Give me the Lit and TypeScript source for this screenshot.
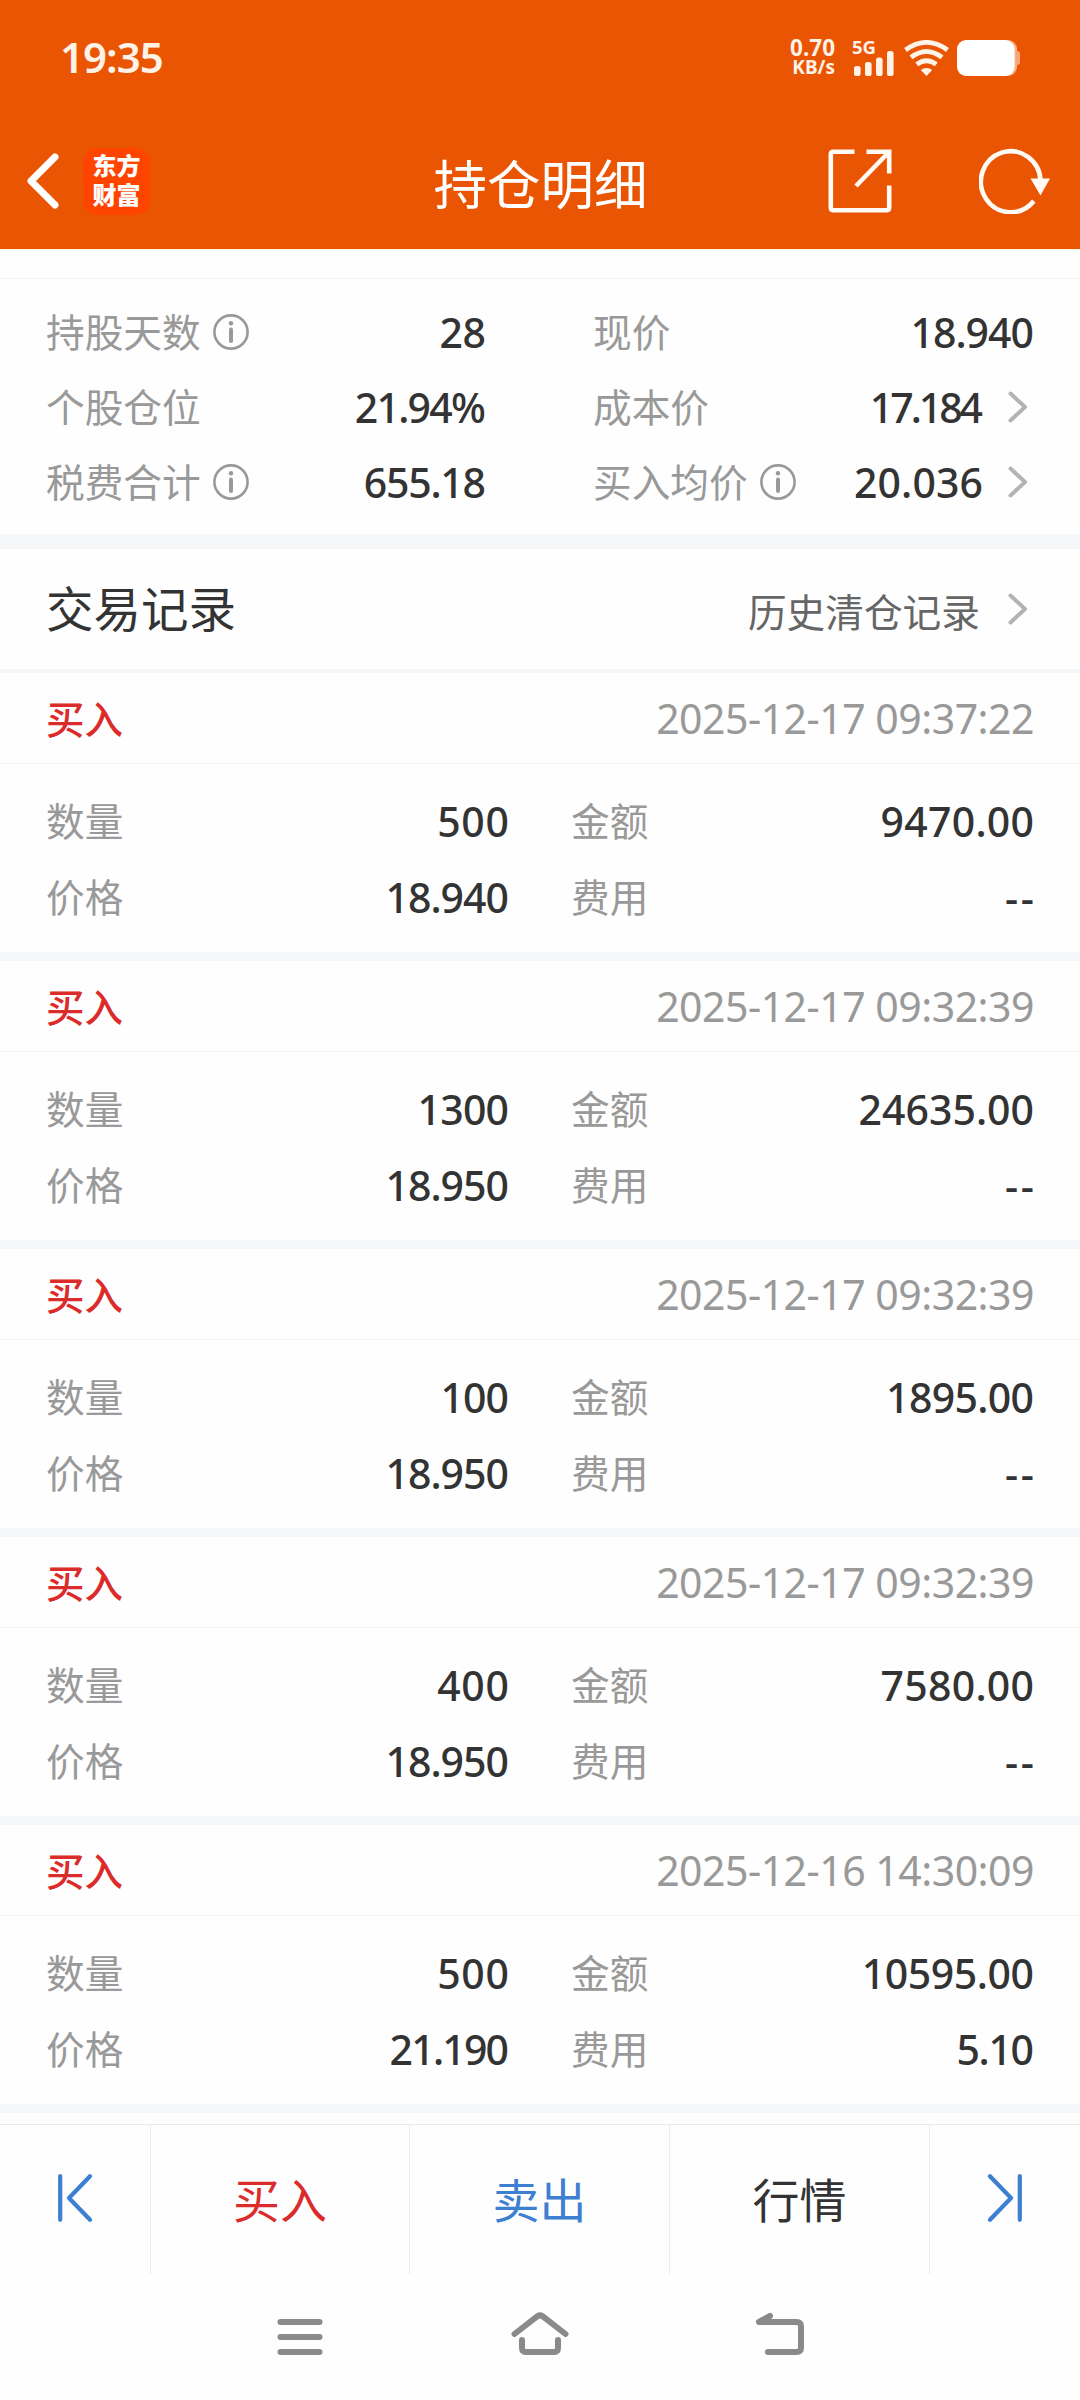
import { LitElement, html, css, svg, nothing } from "lit";
import { customElement, property } from "lit/decorators.js";
import { styleMap } from "lit/directives/style-map.js";

interface Trade {
  time: string;
  qty: string;
  price: string;
  amount: string;
  fee: string;
}

interface Stat {
  label: string;
  value: string;
  info?: boolean;
  link?: boolean;
}

const STATS: Stat[] = [
  { label: "持股天数", value: "28", info: true },
  { label: "现价", value: "18.940" },
  { label: "个股仓位", value: "21.94%" },
  { label: "成本价", value: "17.184", link: true },
  { label: "税费合计", value: "655.18", info: true },
  { label: "买入均价", value: "20.036", info: true, link: true },
];

const TRADES: Trade[] = [
  { time: "2025-12-17 09:37:22", qty: "500", price: "18.940", amount: "9470.00", fee: "--" },
  { time: "2025-12-17 09:32:39", qty: "1300", price: "18.950", amount: "24635.00", fee: "--" },
  { time: "2025-12-17 09:32:39", qty: "100", price: "18.950", amount: "1895.00", fee: "--" },
  { time: "2025-12-17 09:32:39", qty: "400", price: "18.950", amount: "7580.00", fee: "--" },
  { time: "2025-12-16 14:30:09", qty: "500", price: "21.190", amount: "10595.00", fee: "5.10" },
];

const GLYPH_ADJUST: Record<string, number> = { "0": 1.5, "1": -5, ".": -0.5, "%": -3, "-": 3 };

function tracking(value: string) {
  let total = value.includes("17.1") ? -6 : 0;
  for (const ch of value) total += GLYPH_ADJUST[ch] ?? 0;
  const spacing = total / value.length - 0.3;
  return styleMap({ letterSpacing: `${spacing.toFixed(2)}px`, marginRight: `${(-spacing).toFixed(2)}px` });
}

const base = css`
  * { box-sizing: border-box; }
  svg { display: block; flex: none; }
  .label { color: #999; font-size: 38.7px; line-height: 56px; white-space: nowrap; margin-top: -4px; }
  .num {
    color: #333;
    font-family: "Noto Sans", "Noto Sans CJK SC", sans-serif;
    font-weight: 500;
    font-size: 41px;
    line-height: 56px;
    white-space: nowrap;
  }
`;

const chevron = html`<svg width="20" height="32" viewBox="0 0 20 32" fill="none" stroke="#b3b3b3" stroke-width="4" stroke-linecap="round" stroke-linejoin="round"><path d="M2.5 2.5 L17 16 L2.5 29.5"/></svg>`;

const infoIcon = html`<svg width="36" height="36" viewBox="0 0 36 36" fill="none" stroke="#999"><circle cx="18" cy="18" r="16.6" stroke-width="2.6"/><circle cx="18" cy="9.3" r="2.2" fill="#999" stroke="none"/><path d="M18 15.5V27" stroke-width="4" stroke-linecap="round"/></svg>`;

@customElement("status-bar")
export class StatusBar extends LitElement {
  static styles = [base, css`
    :host { display: flex; height: 116px; padding: 0 60px; justify-content: space-between; align-items: center; color: #fff2e6; font-family: "Noto Sans", sans-serif; }
    .clock { font-size: 42px; font-weight: 600; line-height: 60px; letter-spacing: -1px; margin-top: -2px; }
    .right { display: flex; align-items: center; height: 36px; }
    .speed { display: flex; flex-direction: column; align-items: flex-end; width: 46px; font-weight: 700; margin-right: 17px; }
    .rate { font-size: 22.5px; line-height: 21px; margin-top: -2px; }
    .unit { font-size: 19px; line-height: 19px; }
    .signal { width: 43px; height: 36px; margin-right: 9px; }
    .gen { font-size: 18.5px; line-height: 14px; font-weight: 700; height: 11px; }
    .wifi { margin-right: 8px; }
  `];
  render() {
    return html`
      <span class="clock">19:35</span>
      <div class="right">
        <div class="speed"><span class="rate">0.70</span><span class="unit">KB/s</span></div>
        <div class="signal">
          <div class="gen">5G</div>
          <svg width="43" height="25" viewBox="0 0 43 25" fill="#fff2e6">
            ${[[2, 15], [13, 11], [24, 6.5], [35, 0]].map(([x, y]) => svg`<rect x=${x} y=${y} width="6.6" height=${25 - y} rx="2.6"/>`)}
          </svg>
        </div>
        <svg class="wifi" width="45" height="36" viewBox="0 0 45 36" fill="none" stroke="#fff2e6" stroke-width="4.8">
          <path d="M1.5 10 Q22.5 -5.2 43.500 10"/>
          <path d="M7 17.4 Q22.5 5.500 38 17.4"/>
          <path d="M12.7 24.4 Q22.5 17 32.3 24.4"/>
          <path d="M16.8 30 Q22.5 26 28.2 30 L22.5 36 Z" fill="#fff2e6" stroke="none"/>
        </svg>
        <svg width="63" height="36" viewBox="0 0 63 36">
          <rect x="2" y="0" width="58" height="36" rx="9" fill="#f7b48c"/>
          <path d="M59 11 h1 a3 3 0 0 1 3 3 v8 a3 3 0 0 1 -3 3 h-1z" fill="#f4a67a"/>
          <rect x="0" y="0" width="57.5" height="36" rx="9" fill="#fff"/>
        </svg>
      </div>`;
  }
}

@customElement("title-bar")
export class TitleBar extends LitElement {
  static styles = [base, css`
    :host { display: grid; grid-template-columns: 1fr auto 1fr; height: 133px; align-items: center; padding: 0 29px 3px 26px; color: #fff; }
    .left { display: flex; align-items: center; gap: 23px; }
    .logo { display: flex; flex-direction: column; justify-content: center; align-items: center; width: 67px; height: 67px; border-radius: 15px; background: #ff4400; font-weight: 900; font-size: 24px; line-height: 29px; padding-bottom: 4px; }
    .title { font-size: 53.5px; line-height: 70px; margin: 2px -4px 0 0; }
    .actions { display: flex; justify-content: flex-end; align-items: center; gap: 87px; }
  `];
  render() {
    return html`
      <div class="left">
        <svg width="34" height="58" viewBox="0 0 34 58" fill="none" stroke="#fff" stroke-width="7" stroke-linecap="round" stroke-linejoin="round"><path d="M29 5 L5 29 L29 53"/></svg>
        <div class="logo"><span>东方</span><span>财富</span></div>
      </div>
      <div class="title">持仓明细</div>
      <div class="actions">
        <svg width="64" height="64" viewBox="0 0 64 64" fill="none" stroke="#fffaf3" stroke-width="4.6">
          <path d="M26.5 2.8 H5.3 Q2.8 2.8 2.8 5.3 V58.7 Q2.8 61.2 5.3 61.2 H58.7 Q61.2 61.2 61.2 58.7 V36.5"/>
          <path d="M38.5 2.8 H61.2 V24.5"/><path d="M60 4 L28 37"/>
        </svg>
        <svg width="72" height="66" viewBox="0 0 72 66" fill="none" stroke="#fffaf3" stroke-width="4.6">
          <path d="M61.5 33 A29.8 30.5 0 1 0 54.8 53"/>
          <path d="M51.5 30.5 H71 L61.5 47.5 Z" fill="#fffaf3" stroke="none"/>
        </svg>
      </div>`;
  }
}

@customElement("stat-grid")
export class StatGrid extends LitElement {
  static styles = [base, css`
    :host { display: grid; grid-template-columns: 440px 441px; column-gap: 107px; grid-auto-rows: 75px; align-content: start; height: 256px; padding: 15px 46px 0; border-top: 1px solid #f3f3f3; }
    .cell { display: flex; align-items: center; }
    .info { margin: 0 0 0 12px; }
    .value { margin-left: auto; }
    .go { margin: 0 6px 0 25px; }
  `];
  render() {
    return STATS.map((s) => html`
      <div class="cell">
        <span class="label">${s.label}</span>
        ${s.info ? html`<span class="info">${infoIcon}</span>` : nothing}
        <span class="value"><span class="num" style=${tracking(s.value)}>${s.value}</span></span>
        ${s.link ? html`<span class="go">${chevron}</span>` : nothing}
      </div>`);
  }
}

@customElement("trade-record")
export class TradeRecord extends LitElement {
  @property({ attribute: false }) trade!: Trade;
  static styles = [base, css`
    :host { display: block; height: 288px; border-bottom: 9px solid #f6f7f9; }
    .head { display: flex; justify-content: space-between; align-items: center; height: 91px; padding: 0 46px; border-bottom: 1px solid #f5f5f7; }
    .side { color: #dc2b2b; font-size: 38.5px; font-weight: 500; line-height: 56px; margin-top: -3px; }
    .head .time { color: #999; font-weight: 400; letter-spacing: -0.5px; }
    .grid { display: grid; grid-template-columns: 463px 463px; column-gap: 62px; grid-auto-rows: 76px; padding: 19px 46px 0; }
    .cell { display: flex; justify-content: space-between; align-items: center; }
  `];
  private cell(label: string, value: string) {
    return html`<div class="cell"><span class="label">${label}</span><span class="num" style=${tracking(value)}>${value}</span></div>`;
  }
  render() {
    const t = this.trade;
    return html`
      <div class="head"><span class="side">买入</span><span class="num time">${t.time}</span></div>
      <div class="grid">
        ${this.cell("数量", t.qty)}${this.cell("金额", t.amount)}
        ${this.cell("价格", t.price)}${this.cell("费用", t.fee)}
      </div>`;
  }
}

@customElement("trade-actions")
export class TradeActions extends LitElement {
  static styles = [base, css`
    :host { display: grid; grid-template-columns: 151px 259px 260px 260px 150px; height: 150px; border-top: 1px solid #e9e9e9; }
    .cell { display: flex; align-items: center; justify-content: center; border-right: 1px solid #ebebeb; font-size: 47px; line-height: 64px; padding-bottom: 3px; color: #333; }
    .cell:last-child { border-right: 0; }
    .edge { padding-bottom: 4px; }
    .buy { color: #dc2b2b; }
    .sell { color: #3d7fd0; }
  `];
  render() {
    const skip = (d: string) => html`<svg width="36" height="50" viewBox="0 0 36 50" fill="none" stroke="#3d7fd0" stroke-width="4.2" stroke-linecap="round" stroke-linejoin="round"><path d=${d}/></svg>`;
    return html`
      <div class="cell edge">${skip("M3.2 3.2V46.8M33 3.2L12 25L33 46.8")}</div>
      <div class="cell buy">买入</div>
      <div class="cell sell">卖出</div>
      <div class="cell">行情</div>
      <div class="cell edge">${skip("M32.8 3.2V46.8M3 3.2L24 25L3 46.8")}</div>`;
  }
}

@customElement("system-nav")
export class SystemNav extends LitElement {
  static styles = [base, css`
    :host { display: flex; height: 126px; justify-content: center; align-items: flex-start; gap: 180px; padding-top: 36px; }
  `];
  render() {
    const icon = (d: string) => html`<svg width="60" height="48" viewBox="0 0 60 48" fill="none" stroke="#8a8a8a" stroke-width="6" stroke-linecap="round" stroke-linejoin="round"><path d=${d}/></svg>`;
    return html`
      ${icon("M10.5 12H49.5M10.5 27H49.5M10.5 42H49.5")}
      ${icon("M4.5 24L27.5 6.2Q30 4.5 32.5 6.2L55.5 24M12 30V38Q12 42 16 42H44Q48 42 48 38V30")}
      ${icon("M20 6L9 12H46.5Q51 12 51 16.5V37.5Q51 42 46.5 42H18")}`;
  }
}

@customElement("app-root")
export class AppRoot extends LitElement {
  static styles = [base, css`
    :host { display: flex; flex-direction: column; width: 1080px; height: 2400px; overflow: hidden; background: #fefefe; font-family: "Noto Sans CJK SC", sans-serif; }
    .top { height: 250px; background: #ea5504; border-bottom: 1px solid #fff1dc; margin-bottom: 28px; }
    .section { display: flex; align-items: center; justify-content: space-between; height: 139px; border-top: 15px solid #f6f7f9; border-bottom: 4px solid #f6f7f9; padding: 0 52px 0 46px; }
    .heading { color: #333; font-size: 47.5px; line-height: 64px; margin-top: -4px; }
    .history { display: flex; align-items: center; gap: 28px; color: #666; font-size: 38.7px; line-height: 56px; }
    .history-text { margin-top: 1px; }
    .records { flex: 1; }
  `];
  render() {
    return html`
      <div class="top"><status-bar></status-bar><title-bar></title-bar></div>
      <stat-grid></stat-grid>
      <div class="section">
        <span class="heading">交易记录</span>
        <span class="history"><span class="history-text">历史清仓记录</span>${chevron}</span>
      </div>
      <div class="records">
        ${TRADES.map((t) => html`<trade-record .trade=${t}></trade-record>`)}
      </div>
      <trade-actions></trade-actions>
      <system-nav></system-nav>`;
  }
}
